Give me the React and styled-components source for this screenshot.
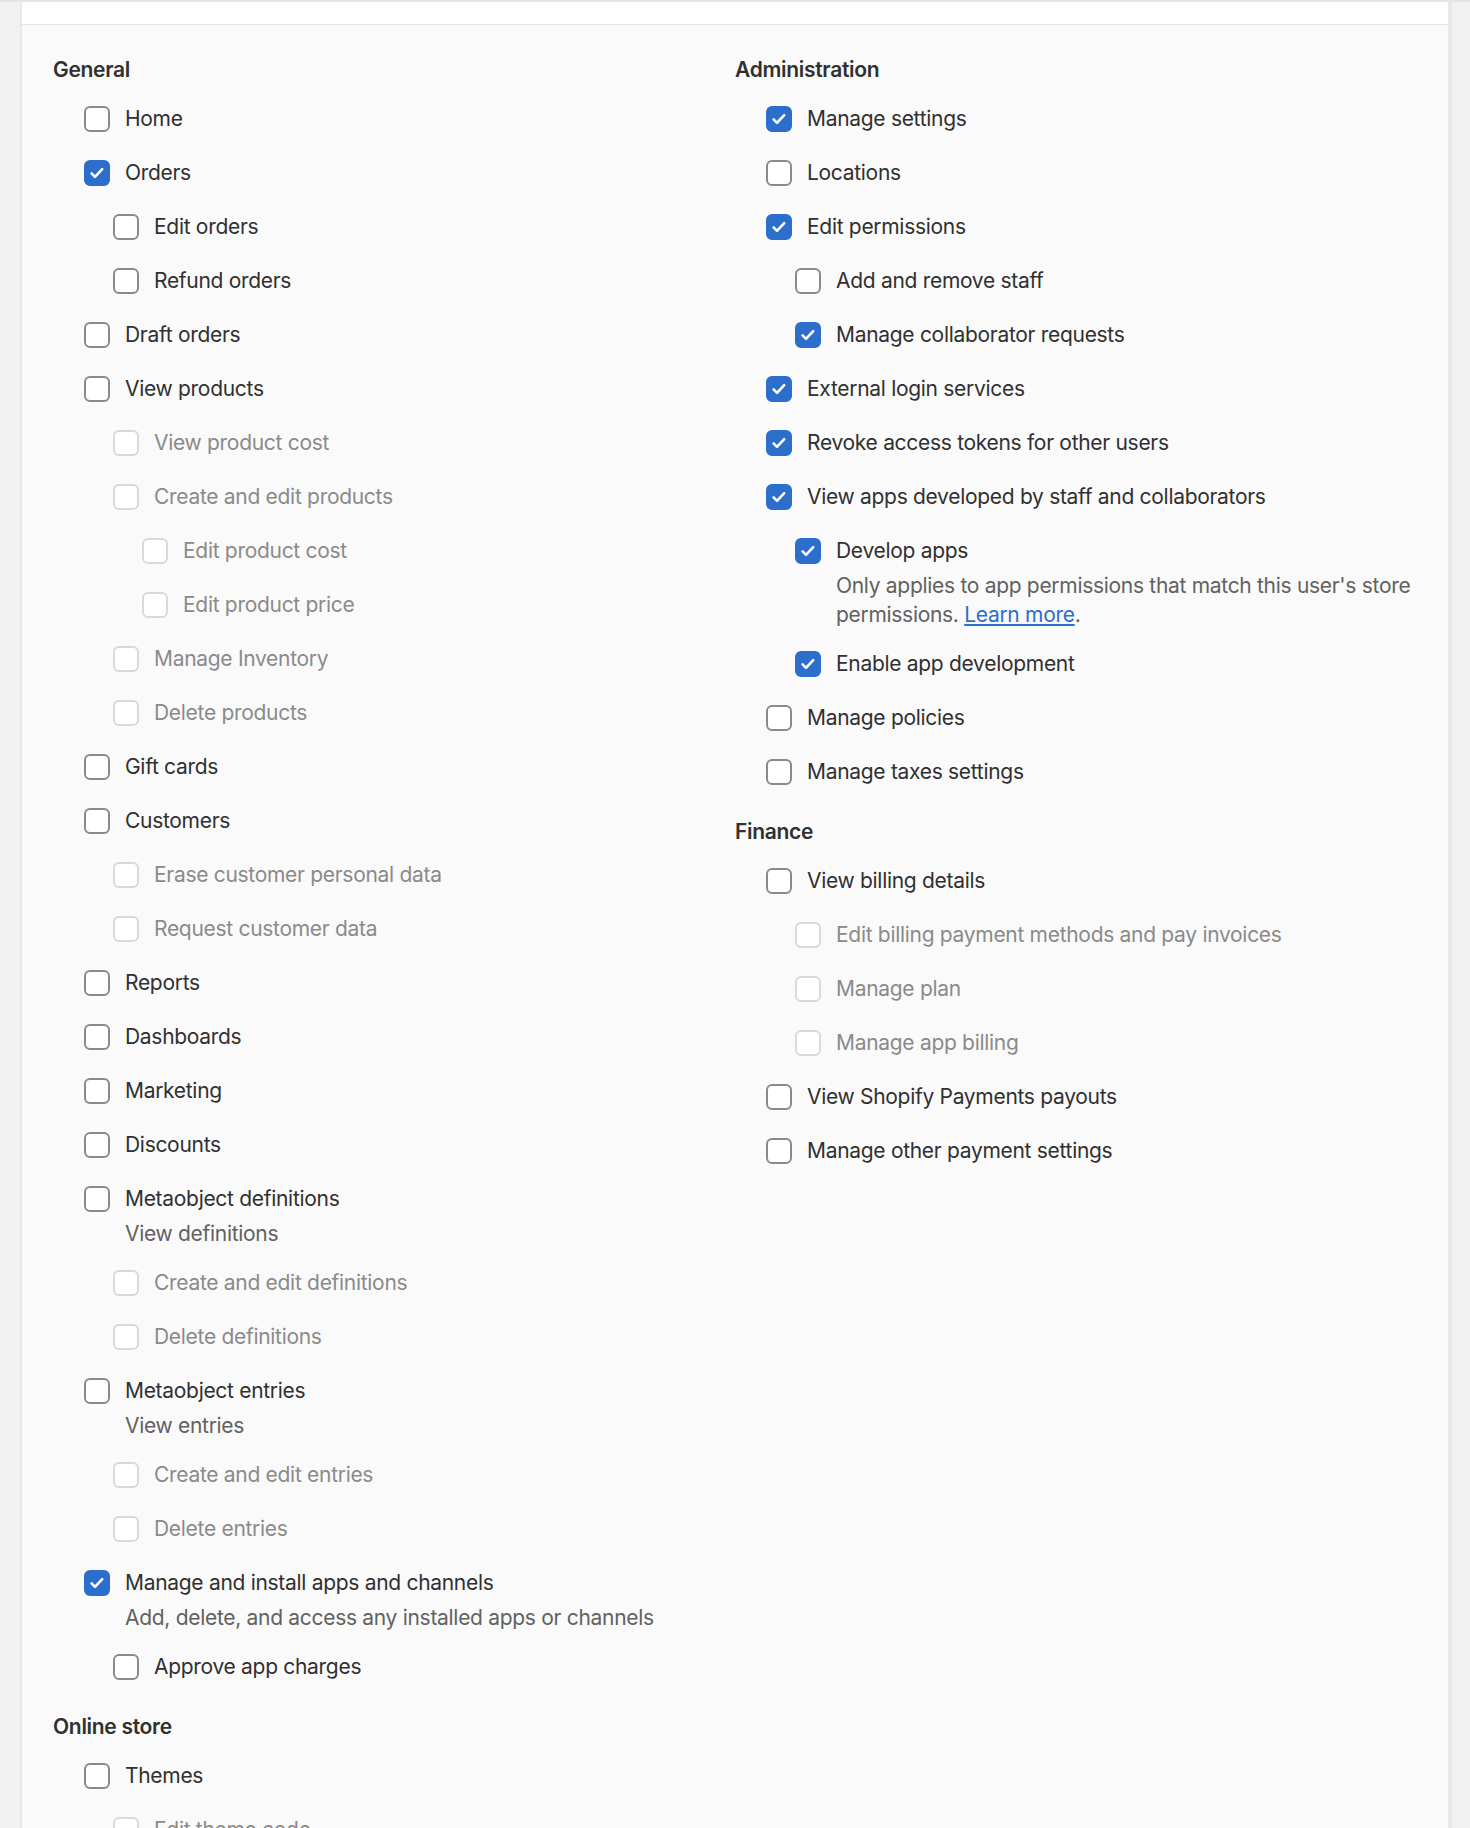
import React from 'react'
import styled, { createGlobalStyle } from 'styled-components'

const GlobalStyle = createGlobalStyle`
  html, body {
    margin: 0;
    padding: 0;
    background: #f1f1f1;
  }
  body {
    font-family: Inter, "Noto Sans", "Liberation Sans", sans-serif;
    color: #303030;
    -webkit-font-smoothing: antialiased;
  }
`

const general = [
  { label: 'Home' },
  { label: 'Orders', checked: true },
  { label: 'Edit orders', level: 1 },
  { label: 'Refund orders', level: 1 },
  { label: 'Draft orders' },
  { label: 'View products' },
  { label: 'View product cost', level: 1, disabled: true },
  { label: 'Create and edit products', level: 1, disabled: true },
  { label: 'Edit product cost', level: 2, disabled: true },
  { label: 'Edit product price', level: 2, disabled: true },
  { label: 'Manage Inventory', level: 1, disabled: true },
  { label: 'Delete products', level: 1, disabled: true },
  { label: 'Gift cards' },
  { label: 'Customers' },
  { label: 'Erase customer personal data', level: 1, disabled: true },
  { label: 'Request customer data', level: 1, disabled: true },
  { label: 'Reports' },
  { label: 'Dashboards' },
  { label: 'Marketing' },
  { label: 'Discounts' },
  { label: 'Metaobject definitions', desc: 'View definitions' },
  { label: 'Create and edit definitions', level: 1, disabled: true },
  { label: 'Delete definitions', level: 1, disabled: true },
  { label: 'Metaobject entries', desc: 'View entries' },
  { label: 'Create and edit entries', level: 1, disabled: true },
  { label: 'Delete entries', level: 1, disabled: true },
  { label: 'Manage and install apps and channels', checked: true, desc: 'Add, delete, and access any installed apps or channels' },
  { label: 'Approve app charges', level: 1 },
]

const onlineStore = [
  { label: 'Themes' },
  { label: 'Edit theme code', level: 1, disabled: true },
]

const administration = [
  { label: 'Manage settings', checked: true },
  { label: 'Locations' },
  { label: 'Edit permissions', checked: true },
  { label: 'Add and remove staff', level: 1 },
  { label: 'Manage collaborator requests', level: 1, checked: true },
  { label: 'External login services', checked: true },
  { label: 'Revoke access tokens for other users', checked: true },
  { label: 'View apps developed by staff and collaborators', checked: true },
  { label: 'Develop apps', level: 1, checked: true, learnMore: true },
  { label: 'Enable app development', level: 1, checked: true },
  { label: 'Manage policies' },
  { label: 'Manage taxes settings' },
]

const finance = [
  { label: 'View billing details' },
  { label: 'Edit billing payment methods and pay invoices', level: 1, disabled: true },
  { label: 'Manage plan', level: 1, disabled: true },
  { label: 'Manage app billing', level: 1, disabled: true },
  { label: 'View Shopify Payments payouts' },
  { label: 'Manage other payment settings' },
]

function Checkbox({ checked, disabled }) {
  return (
    <Box $checked={checked} $disabled={disabled}>
      {checked && (
        <svg width="18" height="18" viewBox="0 0 18 18" fill="none">
          <path d="M3.6 9.4l3.4 3.4 7.2-7.6" stroke="#fff" strokeWidth="2.6" strokeLinecap="round" strokeLinejoin="round" />
        </svg>
      )}
    </Box>
  )
}

function Permission({ item }) {
  return (
    <Item $level={item.level || 0}>
      <Row>
        <Checkbox checked={item.checked} disabled={item.disabled} />
        <Label $disabled={item.disabled}>{item.label}</Label>
      </Row>
      {item.desc && <Desc>{item.desc}</Desc>}
      {item.learnMore && (
        <Desc>
          Only applies to app permissions that match this user's store permissions. <Link href="#">Learn more</Link>.
        </Desc>
      )}
    </Item>
  )
}

function Section({ title, items }) {
  return (
    <SectionWrap>
      <Heading>{title}</Heading>
      <List>
        {items.map((item) => (
          <Permission key={item.label} item={item} />
        ))}
      </List>
    </SectionWrap>
  )
}

export default function App() {
  return (
    <>
      <GlobalStyle />
      <Page>
        <Gutter />
        <Panel>
          <PanelHeader />
          <PanelBody>
            <Column>
              <Section title="General" items={general} />
              <Section title="Online store" items={onlineStore} />
            </Column>
            <Column>
              <Section title="Administration" items={administration} />
              <Section title="Finance" items={finance} />
            </Column>
          </PanelBody>
        </Panel>
        <RightGutter />
      </Page>
    </>
  )
}

const Page = styled.div`
  display: flex;
  min-height: 1828px;
  border-top: 2px solid #e6e6e6;
  background: #f1f1f1;
`

const Gutter = styled.div`
  width: 20px;
  flex-shrink: 0;
  border-right: 2px solid #e9e9e9;
`

const RightGutter = styled.div`
  width: 18px;
  flex-shrink: 0;
  border-left: 4px solid #e9e9e9;
`

const Panel = styled.div`
  flex: 1;
  display: flex;
  flex-direction: column;
  background: #fafafa;
`

const PanelHeader = styled.div`
  height: 22px;
  background: #fff;
  border-bottom: 1px solid #e6e6e6;
`

const PanelBody = styled.div`
  display: grid;
  grid-template-columns: 1fr 1fr;
  padding: 30px 31px 40px;
`

const Column = styled.div`
  display: flex;
  flex-direction: column;
  gap: 26px;
`

const SectionWrap = styled.section`
  display: flex;
  flex-direction: column;
`

const Heading = styled.h3`
  margin: 0 0 14px;
  font-size: 21px;
  line-height: 30px;
  font-weight: 600;
  letter-spacing: -0.3px;
  color: #303030;
`

const List = styled.div`
  display: flex;
  flex-direction: column;
  gap: 15px;
  padding-left: 31px;
`

const Item = styled.div`
  display: flex;
  flex-direction: column;
  margin-left: ${(p) => p.$level * 29}px;
`

const Row = styled.label`
  display: flex;
  align-items: center;
  gap: 15px;
  min-height: 39px;
`

const Box = styled.span`
  box-sizing: border-box;
  width: 26px;
  height: 26px;
  flex-shrink: 0;
  border-radius: 6px;
  display: flex;
  align-items: center;
  justify-content: center;
  background: ${(p) => (p.$checked ? '#2c6ecb' : '#fff')};
  border: 2px solid ${(p) => (p.$checked ? '#2c6ecb' : p.$disabled ? '#d9d9d9' : '#8a8a8a')};
`

const Label = styled.span`
  font-size: 21px;
  line-height: 30px;
  letter-spacing: -0.3px;
  color: ${(p) => (p.$disabled ? '#8a8a8a' : '#303030')};
`

const Desc = styled.p`
  margin: 1px 0 0 41px;
  font-size: 21px;
  line-height: 29px;
  letter-spacing: -0.3px;
  color: #616161;
`

const Link = styled.a`
  color: #2c6ecb;
  text-decoration: underline;
`
